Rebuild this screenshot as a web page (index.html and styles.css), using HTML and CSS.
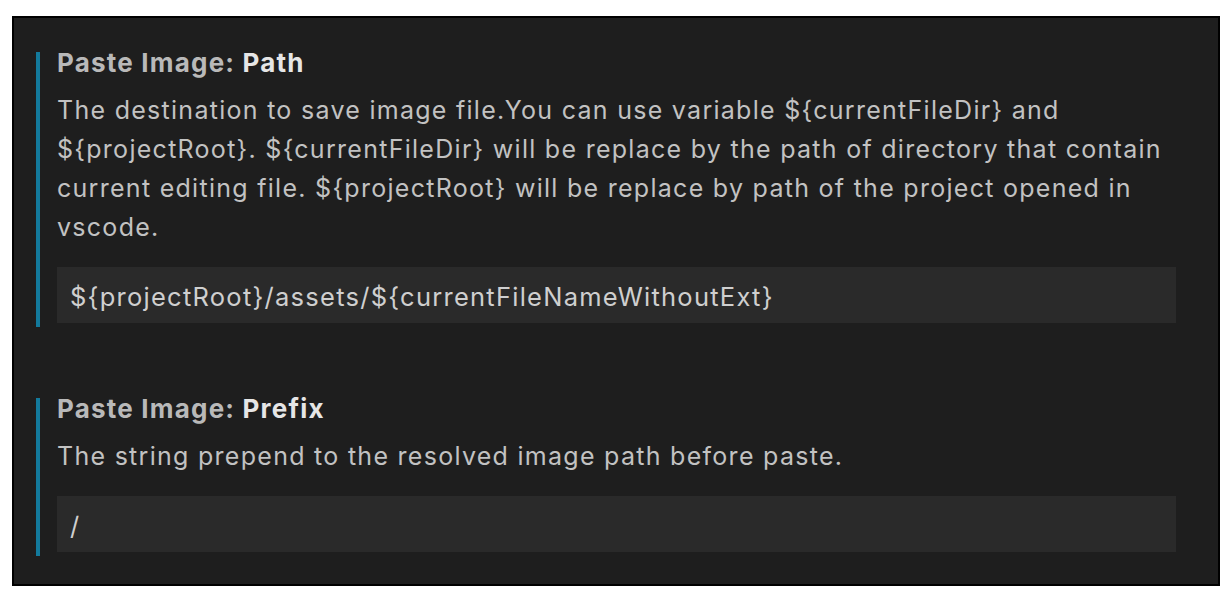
FILE: index.html
```html
<!DOCTYPE html>
<html lang="en">
<head>
<meta charset="utf-8">
<title>Paste Image settings</title>
<link rel="stylesheet" href="styles.css">
</head>
<body>
<div class="panel">
  <div class="setting">
    <div class="title"><span class="cat">Paste Image: </span><span class="name">Path</span></div>
    <div class="desc">The destination to save image file.You can use variable ${currentFileDir} and ${projectRoot}. ${currentFileDir} will be replace by the path of directory that contain current editing file. ${projectRoot} will be replace by path of the project opened in vscode.</div>
    <div class="input">${projectRoot}/assets/${currentFileNameWithoutExt}</div>
  </div>
  <div class="setting">
    <div class="title"><span class="cat">Paste Image: </span><span class="name">Prefix</span></div>
    <div class="desc">The string prepend to the resolved image path before paste.</div>
    <div class="input">/</div>
  </div>
</div>
</body>
</html>
```

FILE: styles.css
```css
html, body {
  margin: 0;
  padding: 0;
  background: #ffffff;
}
.panel {
  box-sizing: border-box;
  margin: 16px 0 0 12px;
  width: 1208px;
  height: 570px;
  border: 2px solid #000000;
  background: #1e1e1e;
  padding: 34px 42px 0 22px;
  display: flex;
  flex-direction: column;
  gap: 71px;
  font-family: "Inter", "Noto Sans", sans-serif;
}
.setting {
  border-left: 4px solid #137a9c;
  padding: 0 0 4px 17px;
  display: flex;
  flex-direction: column;
}
.title {
  font-size: 26px;
  line-height: 24px;
  font-weight: 700;
  letter-spacing: 1.2px;
  margin-top: -1px;
  white-space: nowrap;
}
.cat { color: #b9b9b9; }
.name { color: #e6e6e6; }
.desc {
  margin-top: 15.6px;
  font-size: 25px;
  line-height: 39px;
  letter-spacing: 1.28px;
  color: #c2c2c2;
}
.input {
  box-sizing: border-box;
  margin-top: 20.6px;
  height: 56px;
  padding: 4px 13px 0;
  line-height: 52px;
  font-size: 25.5px;
  letter-spacing: 1.25px;
  background: #2a2a2a;
  color: #cfcfcf;
  white-space: nowrap;
}
```
